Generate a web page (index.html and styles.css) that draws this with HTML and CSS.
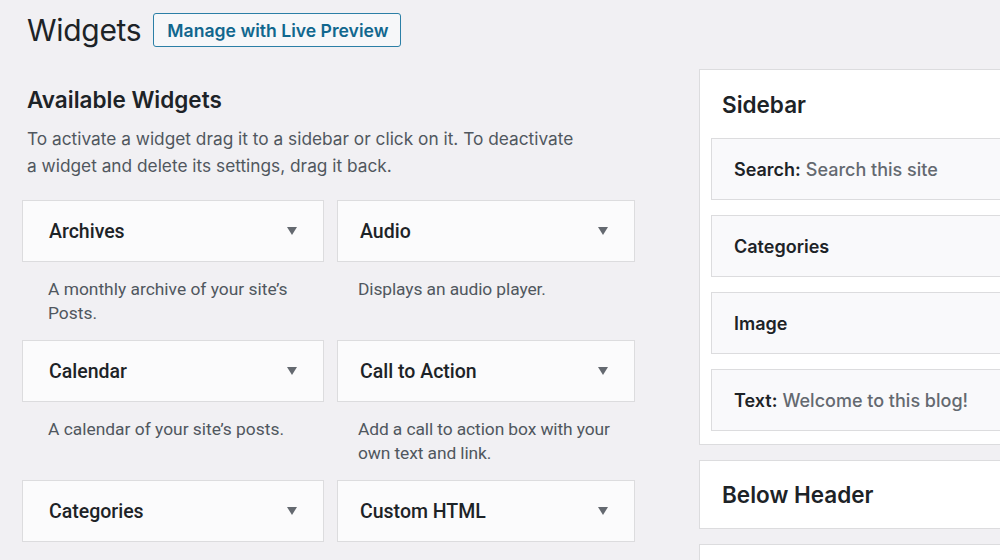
FILE: index.html
```html
<!DOCTYPE html>
<html lang="en">
<head>
    <meta charset="UTF-8">
    <title>Widgets</title>
    <link rel="stylesheet" href="styles.css">
</head>
<body>
    <div class="wrap">
        <div class="page-head">
            <h1>Widgets</h1>
            <a class="btn-preview" href="#">Manage with Live Preview</a>
        </div>

        <div class="columns">
            <div class="available">
                <h2>Available Widgets</h2>
                <p class="intro">To activate a widget drag it to a sidebar or click on it. To deactivate a widget and delete its settings, drag it back.</p>

                <div class="widget-grid">
                    <div class="widget">
                        <div class="widget-top"><span>Archives</span><i class="arrow"></i></div>
                        <div class="widget-desc">A monthly archive of your site’s Posts.</div>
                    </div>
                    <div class="widget">
                        <div class="widget-top"><span>Audio</span><i class="arrow"></i></div>
                        <div class="widget-desc">Displays an audio player.</div>
                    </div>
                    <div class="widget">
                        <div class="widget-top"><span>Calendar</span><i class="arrow"></i></div>
                        <div class="widget-desc">A calendar of your site’s posts.</div>
                    </div>
                    <div class="widget">
                        <div class="widget-top"><span>Call to Action</span><i class="arrow"></i></div>
                        <div class="widget-desc">Add a call to action box with your own text and link.</div>
                    </div>
                    <div class="widget">
                        <div class="widget-top"><span>Categories</span><i class="arrow"></i></div>
                        <div class="widget-desc"></div>
                    </div>
                    <div class="widget">
                        <div class="widget-top"><span>Custom HTML</span><i class="arrow"></i></div>
                        <div class="widget-desc"></div>
                    </div>
                </div>
            </div>

            <div class="sidebars">
                <div class="sidebar-box">
                    <h3>Sidebar</h3>
                    <div class="in-widget"><b>Search:</b> <span>Search this site</span></div>
                    <div class="in-widget"><b>Categories</b></div>
                    <div class="in-widget"><b>Image</b></div>
                    <div class="in-widget"><b>Text:</b> <span>Welcome to this blog!</span></div>
                </div>
                <div class="sidebar-box closed">
                    <h3>Below Header</h3>
                </div>
                <div class="sidebar-box closed">
                    <h3>Footer</h3>
                </div>
            </div>
        </div>
    </div>
</body>
</html>
```

FILE: styles.css
```css
body {
    margin: 0;
    background: #f1f0f3;
    font-family: Inter, 'Noto Sans', sans-serif;
    color: #1d2327;
    overflow: hidden;
    height: 560px;
}
.wrap {
    padding: 13px 0 0 22px;
    width: 1100px;
}
.page-head {
    display: flex;
    align-items: center;
    gap: 12px;
    padding-left: 5px;
    height: 34px;
}
.page-head h1 {
    margin: 0;
    font-size: 30px;
    font-weight: 400;
    letter-spacing: -0.3px;
}
.btn-preview {
    display: flex;
    align-items: center;
    height: 32px;
    padding: 0 12px 0 13px;
    border: 1px solid #2b7fa6;
    border-radius: 3px;
    background: #f6f7f9;
    color: #11678e;
    font-size: 17.6px;
    font-weight: 600;
    text-decoration: none;
}
.columns {
    display: flex;
    align-items: flex-start;
}
.available {
    width: 612px;
}
.available h2 {
    margin: 40px 0 0 5px;
    font-size: 22.5px;
    font-weight: 600;
    line-height: 26px;
}
.intro {
    margin: 12px 0 0 5px;
    font-size: 17.3px;
    line-height: 27px;
    color: #50575e;
    width: 560px;
}
.widget-grid {
    display: grid;
    grid-template-columns: 302px 298px;
    column-gap: 13px;
    margin-top: 21px;
}
.widget-top {
    display: flex;
    align-items: center;
    justify-content: space-between;
    height: 60px;
    padding: 0 26px;
    border: 1px solid #dcdcde;
    background: #fbfbfc;
    font-family: Roboto, 'Noto Sans', sans-serif;
    font-size: 19.5px;
    font-weight: 500;
    color: #1d2327;
}
.arrow {
    width: 0;
    height: 0;
    border-left: 5px solid transparent;
    border-right: 5px solid transparent;
    border-top: 8px solid #646970;
}
.widget-desc {
    height: 63px;
    padding: 15px 16px 0 26px;
    font-family: Roboto, 'Noto Sans', sans-serif;
    font-size: 17.4px;
    line-height: 24px;
    color: #50575e;
}
.widget:nth-child(even) .widget-top {
    padding-left: 22px;
}
.widget:nth-child(even) .widget-desc {
    padding: 15px 8px 0 21px;
    letter-spacing: -0.1px;
}
.sidebars {
    margin: 22px 0 0 65px;
    width: 330px;
    display: flex;
    flex-direction: column;
    gap: 15px;
}
.sidebar-box {
    background: #fff;
    border: 1px solid #dcdcde;
    padding: 0 12px 13px 11px;
}
.sidebar-box h3 {
    margin: 0;
    height: 68px;
    display: flex;
    align-items: center;
    padding-left: 11px;
    font-size: 22.5px;
    font-weight: 600;
}
.sidebar-box.closed {
    padding-bottom: 0;
}
.sidebar-box.closed h3 {
    height: 67px;
}
.in-widget {
    display: flex;
    align-items: center;
    gap: 5px;
    height: 60px;
    padding-left: 22px;
    margin-bottom: 15px;
    border: 1px solid #dcdcde;
    background: #f9f9fb;
    font-size: 18px;
}
.in-widget:last-child {
    margin-bottom: 0;
}
.in-widget b {
    font-weight: 600;
}
.in-widget span {
    color: #646970;
    font-weight: 500;
}
```
